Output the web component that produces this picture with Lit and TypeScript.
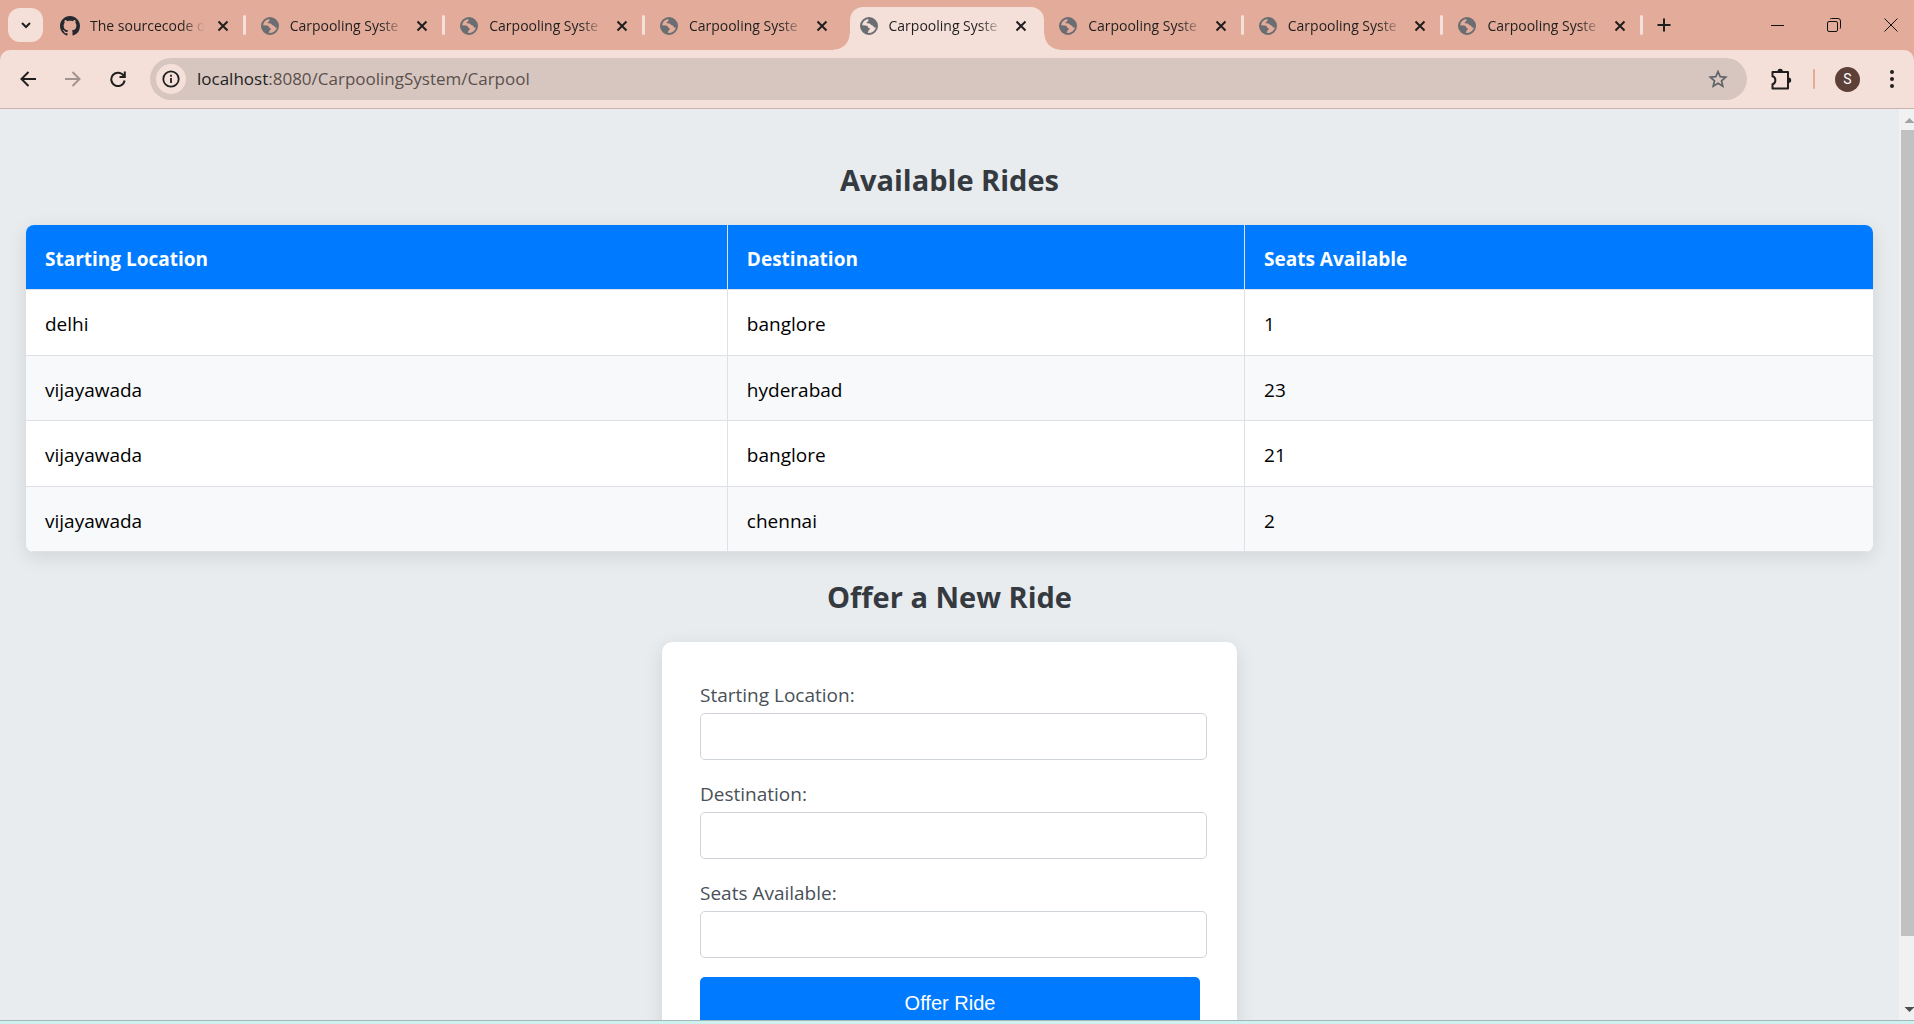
import { LitElement, html, css, svg, nothing } from "lit";
import { customElement, state } from "lit/decorators.js";
import { classMap } from "lit/directives/class-map.js";

interface Tab {
  title: string;
  icon: "github" | "globe";
}

interface Ride {
  from: string;
  to: string;
  seats: number;
}

const carpool: Tab = { title: "Carpooling Syste", icon: "globe" };
const TABS: Tab[] = [
  { title: "The sourcecode o", icon: "github" },
  carpool, carpool, carpool, carpool, carpool, carpool, carpool,
];

const RIDES: Ride[] = [
  { from: "delhi", to: "banglore", seats: 1 },
  { from: "vijayawada", to: "hyderabad", seats: 23 },
  { from: "vijayawada", to: "banglore", seats: 21 },
  { from: "vijayawada", to: "chennai", seats: 2 },
];

const icon = (size: number, box: string, body: unknown) => html`
  <svg width=${size} height=${size} viewBox=${box} fill="none" aria-hidden="true">${body}</svg>`;

const githubIcon = icon(20, "0 0 16 16", svg`<path fill="#24292f" d="M8 0C3.58 0 0 3.58 0 8c0 3.54 2.29 6.53 5.47 7.59.4.07.55-.17.55-.38 0-.19-.01-.82-.01-1.49-2.01.37-2.53-.49-2.69-.94-.09-.23-.48-.94-.82-1.13-.28-.15-.68-.52-.01-.53.63-.01 1.08.58 1.23.82.72 1.21 1.87.87 2.33.66.07-.52.28-.87.51-1.07-1.78-.2-3.64-.89-3.64-3.95 0-.87.31-1.59.82-2.15-.08-.2-.36-1.02.08-2.12 0 0 .67-.21 2.2.82.64-.18 1.32-.27 2-.27s1.36.09 2 .27c1.53-1.04 2.2-.82 2.2-.82.44 1.1.16 1.92.08 2.12.51.56.82 1.27.82 2.15 0 3.07-1.87 3.75-3.65 3.95.29.25.54.73.54 1.48 0 1.07-.01 1.93-.01 2.2 0 .21.15.46.55.38A8.01 8.01 0 0 0 16 8c0-4.42-3.58-8-8-8z"/>`);

const globeIcon = icon(20, "0 0 20 20", svg`
  <circle cx="10" cy="10" r="8" stroke="#6a6d71" stroke-width="2"/>
  <path fill="#6a6d71" d="M10.5 2.6c-1 .5-1.300 1.100-1.100 1.900.2.8-.7 1.200-1.400 1.500-.6.300-.4 1.100.3 1.200l2.200.2c.9.100 1.100.9 1.700 1.500.7.700 2 .4 2.200 1.300.2 1 .9 1.400 1.900 1.200l2-.6A8.500 8.500 0 0 0 10.500 2.600zM2.300 9.200l4.400.2c1.300.1 2.300.7 2.300 1.800 0 .9 1.900.3 1.900 1.600 0 1.200-1.500 1.100-1.500 2.200 0 .8-.6 1.100-.7 2.800C4.500 17 2 13.500 2.300 9.200z"/>`);

const closeIcon = icon(12, "0 0 12 12", svg`<path d="M1.500 1.500l9 9M10.500 1.500l-9 9" stroke="#1f1f1f" stroke-width="2"/>`);

const strokeIcon = (size: number, d: string, color = "#1f1f1f", width = 2) =>
  icon(size, `0 0 ${size} ${size}`, svg`<path d=${d} stroke=${color} stroke-width=${width}/>`);

@customElement("browser-tab-strip")
export class BrowserTabStrip extends LitElement {
  @state() private active = 4;

  static styles = css`
    :host {
      display: flex;
      align-items: stretch;
      flex: none;
      height: 50px;
      background: #e3ab99;
      color: #1f1f1f;
      font: 14px/20px "Open Sans", "Noto Sans", sans-serif;
    }
    button {
      display: grid;
      place-items: center;
      padding: 0;
      border: 0;
      background: none;
      color: inherit;
      font: inherit;
    }
    svg { display: block; }
    .search {
      flex: none;
      width: 35px;
      height: 34px;
      margin: 8px 4px 8px 8px;
      border-radius: 12px;
      background: #f5e0d9;
    }
    .tabs {
      display: flex;
      flex: 0 1 1597px;
      min-width: 0;
    }
    .tab {
      position: relative;
      display: flex;
      flex: 1 1 0;
      align-items: center;
      min-width: 0;
      padding: 0 1px 0 4px;
    }
    .body {
      display: flex;
      flex: 1;
      align-items: center;
      min-width: 0;
      height: 43px;
      margin-top: 7px;
      padding: 0 14px 6px 9px;
      box-sizing: border-box;
      border-radius: 13px 13px 0 0;
    }
    .active .body { background: #f5e0d9; }
    .active::before,
    .active::after {
      content: "";
      position: absolute;
      bottom: 0;
      width: 16px;
      height: 16px;
    }
    .active::before {
      left: -12px;
      background: radial-gradient(circle at 0 0, transparent 15px, #f5e0d9 16px);
    }
    .active::after {
      right: -15px;
      background: radial-gradient(circle at 100% 0, transparent 15px, #f5e0d9 16px);
    }
    .title {
      flex: 1;
      min-width: 0;
      margin: 0 7px 0 10px;
      overflow: hidden;
      white-space: nowrap;
      -webkit-mask-image: linear-gradient(to right, #000 78%, transparent 98%);
      mask-image: linear-gradient(to right, #000 78%, transparent 98%);
    }
    .title button { display: block; }
    .close { flex: none; width: 18px; height: 18px; }
    .divider {
      flex: none;
      align-self: center;
      width: 3px;
      height: 20px;
      margin-left: -3px;
      border-radius: 2px;
      background: #f5e0d9;
    }
    .new { width: 24px; margin-left: 8px; }
    .window {
      display: flex;
      gap: 11px;
      margin-left: auto;
    }
    .window button { width: 46px; }
  `;

  render() {
    return html`
      <button class="search" aria-label="Search tabs">${strokeIcon(14, "M3 5l4 4 4-4")}</button>
      <div class="tabs">
        ${TABS.map((tab, i) => {
          const divided = i !== this.active && i !== this.active - 1;
          return html`
            <div class=${classMap({ tab: true, active: i === this.active })}>
              <div class="body">
                ${tab.icon === "github" ? githubIcon : globeIcon}
                <div class="title"><button @click=${() => (this.active = i)}>${tab.title}</button></div>
                <button class="close" aria-label="Close tab">${closeIcon}</button>
              </div>
              ${divided ? html`<span class="divider"></span>` : nothing}
            </div>`;
        })}
      </div>
      <button class="new" aria-label="New tab">${strokeIcon(14, "M7 0.500v13M0.500 7h13")}</button>
      <div class="window">
        <button aria-label="Minimize">${strokeIcon(13, "M0 6.500h13", "#111", 1)}</button>
        <button aria-label="Restore">
          ${icon(14, "0 0 14 14", svg`
            <rect x=".5" y="3.500" width="10" height="10" rx="1.500" stroke="#111"/>
            <path d="M3 1.200Q3.500.5 4.500.5H11a2.500 2.500 0 0 1 2.500 2.500v6.500q0 1-.8 1.500" stroke="#111"/>`)}
        </button>
        <button aria-label="Close">${strokeIcon(14, "M.5.5l13 13M13.500.5l-13 13", "#111", 1)}</button>
      </div>
    `;
  }
}

@customElement("browser-toolbar")
export class BrowserToolbar extends LitElement {
  static styles = css`
    :host {
      display: block;
      flex: none;
      background: #e3ab99;
      font: 17px/24px "Open Sans", "Noto Sans", sans-serif;
    }
    .bar {
      display: flex;
      align-items: center;
      height: 58px;
      border-bottom: 1px solid #c9b3ac;
      border-radius: 10px 10px 0 0;
      background: #f5e0d9;
    }
    button {
      display: grid;
      flex: none;
      place-items: center;
      width: 45px;
      height: 42px;
      padding: 0;
      border: 0;
      background: none;
    }
    svg { display: block; }
    .nav { display: flex; padding: 0 10px 0 5px; }
    .address {
      display: flex;
      flex: 1;
      align-items: center;
      height: 42px;
      padding: 0 6px;
      border-radius: 21px;
      background: #d7c6bf;
    }
    .address .info {
      width: 30px;
      height: 30px;
      border-radius: 50%;
      background: #f5e0d9;
    }
    .url {
      flex: 1;
      margin-left: 11px;
      color: #5a504d;
      white-space: nowrap;
    }
    .host { color: #1f1f1f; }
    .star { width: 46px; }
    .side { display: flex; align-items: center; margin-left: 11px; }
    .divider {
      width: 2px;
      height: 20px;
      margin: 0 10px;
      border-radius: 1px;
      background: #e3ab99;
    }
    .avatar {
      width: 25px;
      height: 25px;
      margin: 0 10px;
      border-radius: 50%;
      background: #5d4037;
      color: #fff;
      font: 14px/25px Roboto, sans-serif;
    }
    .more { width: 44px; }
  `;

  render() {
    return html`
      <div class="bar">
        <div class="nav">
          <button aria-label="Back">${strokeIcon(16, "M16 8H2M8.500 1L1.500 8l7 7")}</button>
          <button aria-label="Forward">${strokeIcon(16, "M0 8h14M7.500 1l7 7-7 7", "#a2938f")}</button>
          <button aria-label="Reload">
            ${icon(16, "0 0 16 16", svg`
              <path d="M13.800 5A6.700 6.700 0 1 0 14.600 9.500" stroke="#1f1f1f" stroke-width="2"/>
              <path d="M14.800.5v5.500H9.500" stroke="#1f1f1f" stroke-width="2"/>`)}
          </button>
        </div>
        <div class="address">
          <button class="info" aria-label="View site information">
            ${icon(18, "0 0 18 18", svg`
              <circle cx="9" cy="9" r="7.700" stroke="#1f1f1f" stroke-width="1.800"/>
              <path d="M9 8v5M9 4.800v2" stroke="#1f1f1f" stroke-width="1.800"/>`)}
          </button>
          <div class="url"><span class="host">localhost</span>:8080/CarpoolingSystem/Carpool</div>
          <button class="star" aria-label="Bookmark this tab">
            ${icon(20, "0 0 20 20", svg`<path d="M10 2.600l2.200 5.100 5.500.5-4.200 3.600 1.300 5.400L10 14.300l-4.800 2.900 1.300-5.400-4.200-3.600 5.500-.5z" stroke="#5f6368" stroke-width="1.700"/>`)}
          </button>
        </div>
        <div class="side">
          <button aria-label="Extensions">
            ${icon(22, "0 0 22 22", svg`
              <path d="M2.500 4H18v16.500H2.500v-4.200c3.800-.8 3.800-7.200 0-8z" stroke="#1f1f1f" stroke-width="2" stroke-linejoin="round"/>
              <path d="M7.500 3.500a2.700 2.700 0 0 1 5.400 0zM18.500 9.500a2.700 2.700 0 0 1 0 5.400z" fill="#1f1f1f"/>`)}
          </button>
          <span class="divider"></span>
          <button class="avatar" aria-label="Profile">S</button>
          <button class="more" aria-label="Menu">
            ${icon(20, "0 0 20 20", svg`<g fill="#1f1f1f"><circle cx="10" cy="3" r="2"/><circle cx="10" cy="10" r="2"/><circle cx="10" cy="17" r="2"/></g>`)}
          </button>
        </div>
      </div>
    `;
  }
}

@customElement("carpool-page")
export class CarpoolPage extends LitElement {
  static styles = css`
    :host {
      display: block;
      padding: 26px;
      color: #000;
      font: 19px/30px "Open Sans", "Noto Sans", sans-serif;
    }
    h2 {
      margin: 25px 0;
      color: #343a40;
      font-size: 29px;
      line-height: 40px;
      font-weight: 700;
      text-align: center;
    }
    .rides {
      width: 100%;
      height: 327px;
      border-collapse: separate;
      border-spacing: 0;
      border-radius: 8px;
      overflow: hidden;
      background: #fff;
      box-shadow: 0 5px 19px rgba(0, 0, 0, 0.1);
    }
    th, td {
      padding: 19px 19px 15px;
      border-right: 1px solid #dee2e6;
      border-bottom: 1px solid #dee2e6;
      text-align: left;
    }
    th:last-child, td:last-child { border-right: 0; }
    th { background: #007bff; color: #fff; font-weight: 700; }
    .from { width: 38%; }
    .to { width: 28%; }
    tbody tr:nth-child(even) { background: #f8f9fa; }
    form {
      max-width: 575px;
      margin: 0 auto;
      padding: 38px 30px 38px 38px;
      box-sizing: border-box;
      border-radius: 10px;
      background: #fff;
      box-shadow: 0 5px 19px rgba(0, 0, 0, 0.1);
    }
    label { display: block; margin-bottom: 3px; color: #495057; }
    input {
      display: block;
      width: 100%;
      height: 47px;
      margin: 0 0 19px;
      padding: 12px;
      box-sizing: border-box;
      border: 1px solid #ced4da;
      border-radius: 5px;
      background: #fff;
      font: inherit;
    }
    button {
      display: block;
      width: calc(100% - 7px);
      padding: 15px;
      border: 0;
      border-radius: 5px;
      background: #007bff;
      color: #fff;
      font: 20px/23px "Liberation Sans", Arial, sans-serif;
    }
  `;

  render() {
    return html`
      <h2>Available Rides</h2>
      <table class="rides">
        <thead>
          <tr><th class="from">Starting Location</th><th class="to">Destination</th><th>Seats Available</th></tr>
        </thead>
        <tbody>
          ${RIDES.map((r) => html`<tr><td>${r.from}</td><td>${r.to}</td><td>${r.seats}</td></tr>`)}
        </tbody>
      </table>
      <h2>Offer a New Ride</h2>
      <form @submit=${(e: Event) => e.preventDefault()}>
        <label for="start">Starting Location:</label>
        <input id="start" name="start" type="text" />
        <label for="destination">Destination:</label>
        <input id="destination" name="destination" type="text" />
        <label for="seats">Seats Available:</label>
        <input id="seats" name="seats" type="text" inputmode="numeric" />
        <button type="submit">Offer Ride</button>
      </form>
    `;
  }
}

@customElement("app-root")
export class AppRoot extends LitElement {
  static styles = css`
    :host {
      display: flex;
      flex-direction: column;
      height: 100vh;
      overflow: hidden;
      background: #e8ecef;
    }
    .viewport {
      display: flex;
      flex: 1;
      min-height: 0;
      overflow: hidden;
    }
    carpool-page { flex: 1; min-width: 0; }
    .scrollbar {
      display: flex;
      flex-direction: column;
      align-items: flex-end;
      flex: none;
      width: 15px;
      background: #f1f1f1;
    }
    .arrow { flex: none; display: block; }
    .thumb {
      flex: 1;
      width: 13px;
      background: #c1c1c1;
    }
    .rest { flex: 0 0 7%; }
    .taskbar {
      flex: none;
      height: 3px;
      border-top: 1px solid #a3b8b8;
      background: #cdf1ee;
    }
  `;

  render() {
    return html`
      <browser-tab-strip></browser-tab-strip>
      <browser-toolbar></browser-toolbar>
      <div class="viewport">
        <carpool-page></carpool-page>
        <div class="scrollbar" aria-hidden="true">
          <svg class="arrow" width="13" height="21" viewBox="0 0 13 21"><path d="M3.500 14L8.500 9l5 5z" fill="#a3a3a3"/></svg>
          <div class="thumb"></div>
          <div class="rest"></div>
          <svg class="arrow" width="13" height="20" viewBox="0 0 13 20"><path d="M3.500 7l5 5 5-5z" fill="#505050"/></svg>
        </div>
      </div>
      <div class="taskbar"></div>
    `;
  }
}
